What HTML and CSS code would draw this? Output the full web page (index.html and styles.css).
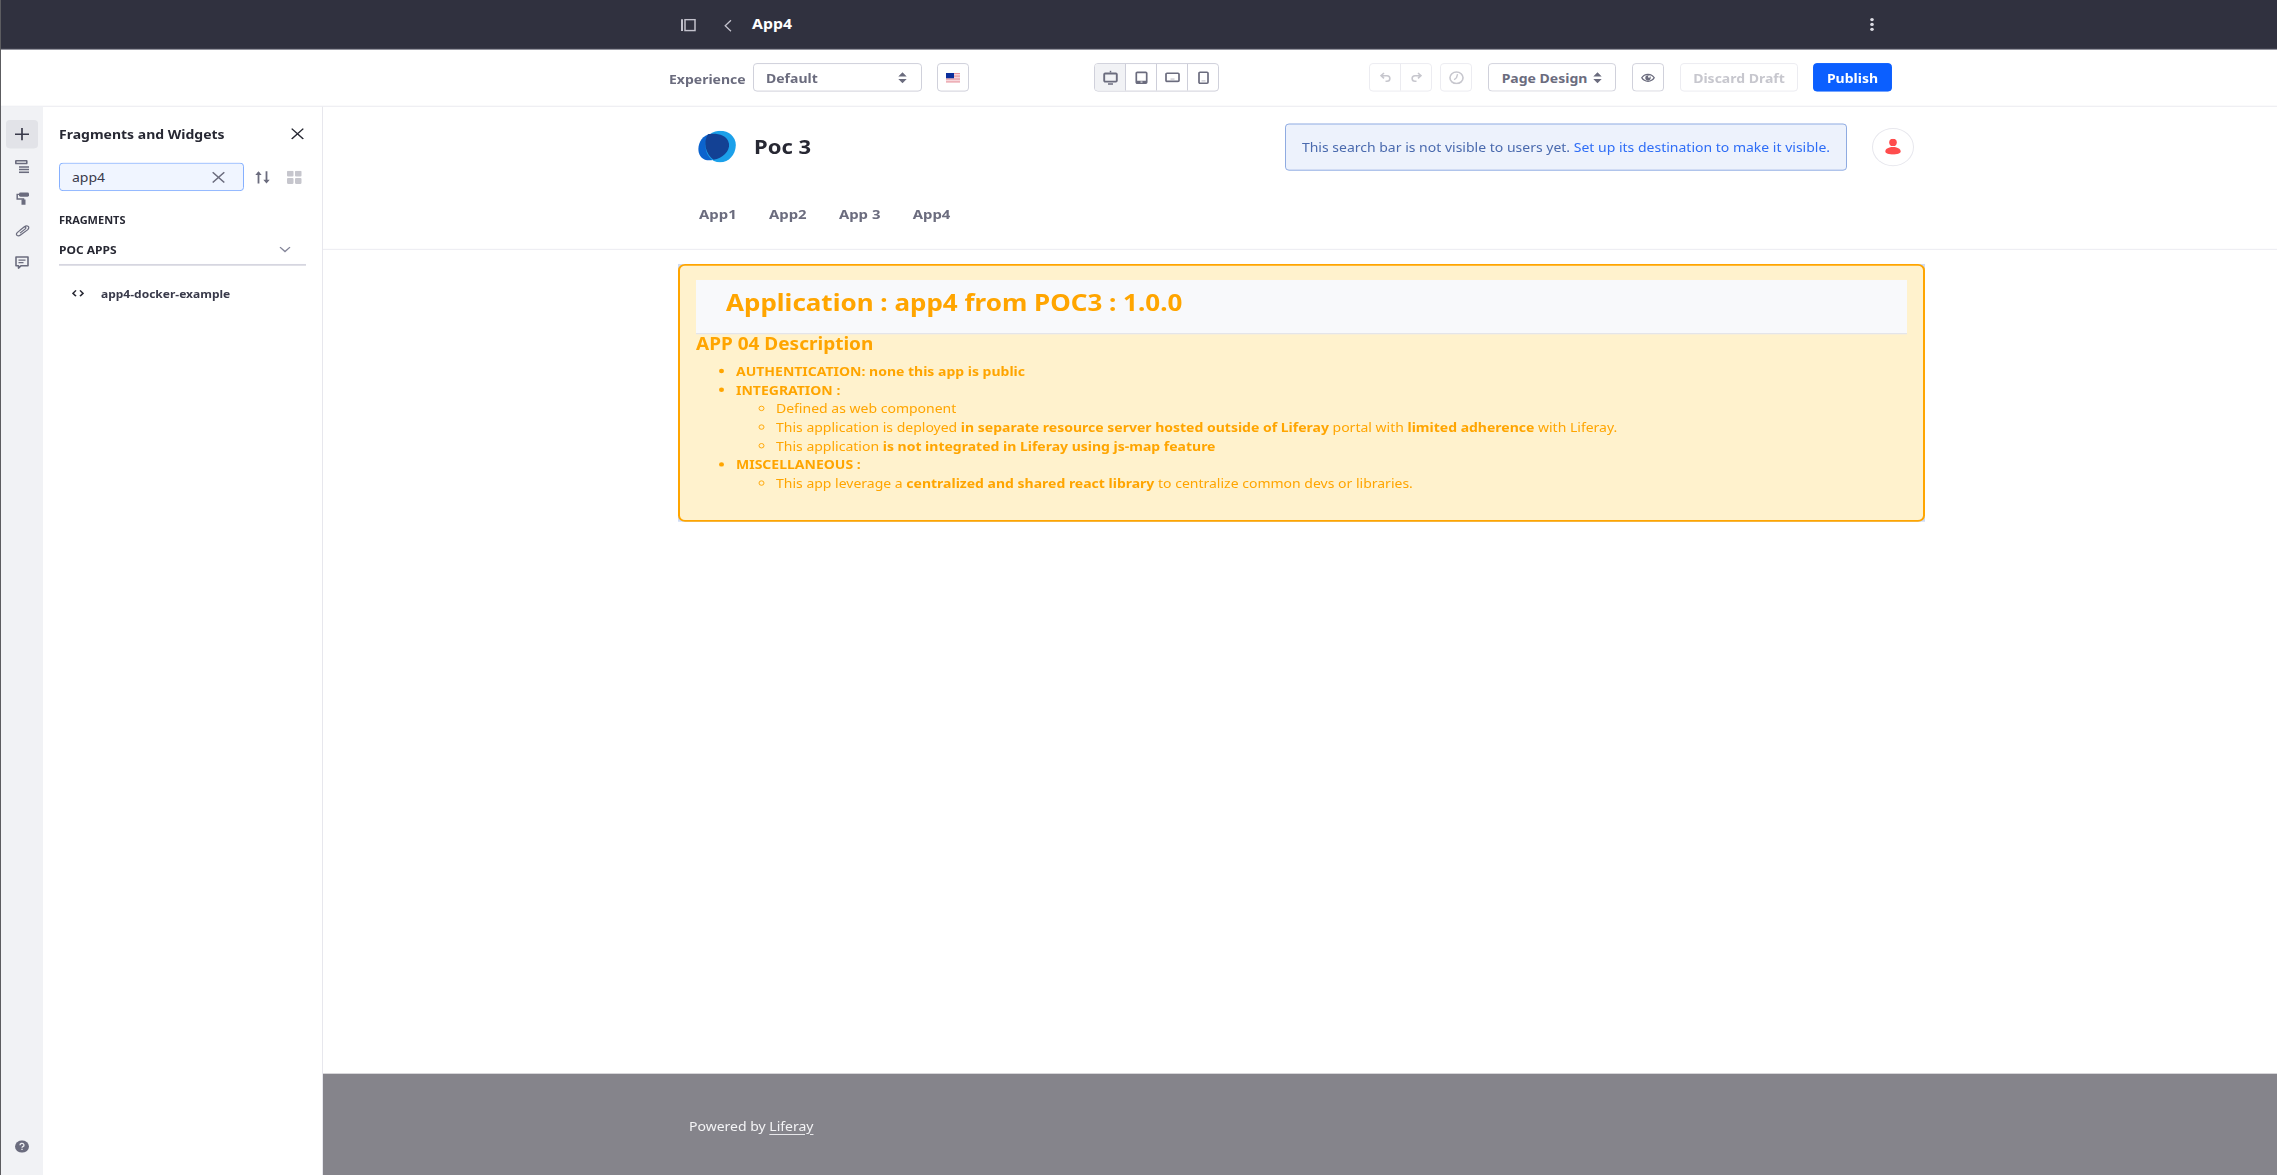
FILE: index.html
```html
<!DOCTYPE html>
<html lang="en">
<head>
<meta charset="utf-8">
<title>App4</title>
<link rel="stylesheet" href="styles.css">
</head>
<body>
<div class="app">
  <header class="topbar">
    <div class="topbar-left">
      <svg class="ic-panel" width="15" height="15" viewBox="0 0 15 14" preserveAspectRatio="none"><path d="M1 .5v12.500" stroke="#c3c2cd" stroke-width="2"/><rect x="4" y="1" width="10" height="11.500" fill="none" stroke="#c3c2cd" stroke-width="1.500"/></svg>
      <svg class="ic-back" width="8" height="14" viewBox="0 0 8 12" preserveAspectRatio="none"><path d="M7 .7L1.200 6 7 11.300" fill="none" stroke="#c3c2cd" stroke-width="1.300"/></svg>
      <span class="page-title">App4</span>
    </div>
    <svg class="ic-kebab" width="4" height="15" viewBox="0 0 4 15" fill="#dcdce4"><circle cx="2" cy="2" r="1.800"/><circle cx="2" cy="7.500" r="1.800"/><circle cx="2" cy="13" r="1.800"/></svg>
  </header>
  <div class="toolbar">
    <span class="exp-label">Experience</span>
    <div class="btn select"><span>Default</span><svg width="9" height="13" viewBox="0 0 9 12" preserveAspectRatio="none" fill="#6b6c7e"><path d="M.3 4.800L4.500.300l4.200 4.500zM.3 7.200l4.200 4.500 4.200-4.500z"/></svg></div>
    <div class="btn flag"><svg width="14" height="11" viewBox="0 0 14 10" preserveAspectRatio="none"><path fill="#f7d7dc" d="M0 0h14v10H0z"/><path d="M0 .5h14M0 3.300h14M0 6.300h14M0 9.300h14" stroke="#e58d96"/><path fill="#0b2f9c" d="M0 0h8v5.500H0z"/></svg></div>
    <div class="devices">
      <div class="device on"><svg width="15" height="17" viewBox="0 0 15 16" preserveAspectRatio="none" fill="none" stroke="#6b6c7e"><path d="M7.500.5v2" stroke-width="1.500"/><rect x="1.200" y="3.500" width="12.600" height="8.500" rx="1" stroke-width="1.900"/><path d="M5 14.600h5" stroke-width="1.600"/></svg></div>
      <div class="device"><svg width="13" height="15" viewBox="0 0 13 14" preserveAspectRatio="none"><rect x="1.300" y="1.300" width="10.400" height="11.400" rx="1" fill="none" stroke="#6b6c7e" stroke-width="1.700"/><path d="M1.500 10.200h10v2.500h-10z" fill="#6b6c7e"/><path d="M5.500 11.500h2" stroke="#fff"/></svg></div>
      <div class="device"><svg width="15" height="12" viewBox="0 0 15 11" preserveAspectRatio="none" fill="none" stroke="#6b6c7e"><rect x="1" y="1.300" width="13" height="8.400" rx="1" stroke-width="1.700"/><path d="M5.500 7.300h4" opacity=".5"/></svg></div>
      <div class="device"><svg width="11" height="15" viewBox="0 0 11 14" preserveAspectRatio="none" fill="none" stroke="#6b6c7e"><rect x="1" y="1.200" width="9" height="11.500" rx="1" stroke-width="1.700"/><path d="M3.500 10.300h4" opacity=".5"/></svg></div>
    </div>
    <div class="history">
      <div><svg width="11" height="12" viewBox="0 0 11 11" preserveAspectRatio="none" fill="none" stroke="#c7c7ce" stroke-width="1.600"><path d="M4 1L1 3.800l3 2.800M1.300 3.800H7a2.800 2.800 0 0 1 0 5.700H5.500"/></svg></div>
      <div><svg width="11" height="12" viewBox="0 0 11 11" preserveAspectRatio="none" fill="none" stroke="#c7c7ce" stroke-width="1.600"><path d="M7 1l3 2.800-3 2.800M9.700 3.800H4a2.800 2.800 0 0 0 0 5.700h1.500"/></svg></div>
    </div>
    <div class="btn clock"><svg width="15" height="15" viewBox="0 0 14 14" fill="none" stroke="#c7c7ce"><circle cx="7" cy="7" r="6.100" stroke-width="1.500"/><path d="M8 3.200L7 7 4.800 9" stroke-width="1.300"/></svg></div>
    <div class="btn design"><span>Page Design</span><svg width="9" height="13" viewBox="0 0 9 12" preserveAspectRatio="none" fill="#6b6c7e"><path d="M.3 4.800L4.500.300l4.200 4.500zM.3 7.200l4.200 4.500 4.200-4.500z"/></svg></div>
    <div class="btn eye"><svg width="14" height="11" viewBox="0 0 14 10" preserveAspectRatio="none"><path d="M.8 5C3.500.300 10.500.300 13.200 5 10.500 9.700 3.500 9.700.8 5z" fill="none" stroke="#6b6c7e" stroke-width="1.400"/><circle cx="7" cy="5" r="2.700" fill="#6b6c7e"/><circle cx="8" cy="4" r="1" fill="#fff"/></svg></div>
    <div class="btn discard">Discard Draft</div>
    <div class="btn publish">Publish</div>
  </div>
  <div class="body">
    <nav class="rail">
      <div class="rail-item on"><svg width="14" height="14" viewBox="0 0 14 14"><path d="M7 0v14M0 7h14" stroke="#393a4a" stroke-width="1.700"/></svg></div>
      <div class="rail-item"><svg width="14" height="15" viewBox="0 0 14 14" preserveAspectRatio="none"><rect x=".8" y=".8" width="11" height="3" rx=".5" fill="none" stroke="#6b6c7e" stroke-width="1.600"/><path d="M4 7.300h10M4 10.100h10M4 13h10" stroke="#6b6c7e" stroke-width="1.600"/></svg></div>
      <div class="rail-item"><svg width="13" height="15" viewBox="0 0 13 14" preserveAspectRatio="none"><rect x="3" y=".5" width="10" height="4.500" rx="1.500" fill="#6b6c7e"/><path d="M3.500 2.500H1.200V7.300H7.500V9" fill="none" stroke="#6b6c7e" stroke-width="1.500"/><path d="M5.500 8h4v5.500h-4z" fill="#6b6c7e"/></svg></div>
      <div class="rail-item"><svg width="15" height="15" viewBox="0 0 24 24" fill="none" stroke="#6b6c7e" stroke-width="2"><path d="M8 16.500l8.500-7.800c2.200-2.100-.4-4.600-2.600-2.600L4 15c-4.400 4.200.6 8.600 4.800 4.800L20 10.500c5-4.700-.3-9.500-5-5.500L8 11"/></svg></div>
      <div class="rail-item"><svg width="14" height="15" viewBox="0 0 14 13" preserveAspectRatio="none" fill="none" stroke="#6b6c7e"><path d="M1 1h12v8.500H6.200L3.500 11.800V9.500H1z" stroke-width="1.600" stroke-linejoin="round"/><path d="M3.500 4h7M3.500 6.500h5" stroke-width="1.300"/></svg></div>
      <div class="rail-help"><svg width="14" height="14" viewBox="0 0 14 14"><circle cx="7" cy="7" r="7" fill="#6b6c7e"/><path d="M5 5.500a2 1.900 0 1 1 2.800 1.600c-.6.300-.8.600-.8 1.300M7 9.500v1.400" fill="none" stroke="#f1f2f5" stroke-width="1.300"/></svg></div>
    </nav>
    <aside class="panel">
      <div class="panel-head"><span>Fragments and Widgets</span><svg width="13" height="13" viewBox="0 0 13 13"><path d="M.7.7l11.600 11.600M12.300.7L.7 12.300" stroke="#272833" stroke-width="1.500"/></svg></div>
      <div class="search-row">
        <div class="search"><span>app4</span><svg width="13" height="13" viewBox="0 0 13 13"><path d="M.7.7l11.600 11.600M12.300.7L.7 12.300" stroke="#6b6c7e" stroke-width="1.500"/></svg></div>
        <svg class="ic-sort" width="15" height="15" viewBox="0 0 15 14" preserveAspectRatio="none"><path d="M3.500 13.500V2M11.500.5v11" stroke="#6b6c7e" stroke-width="1.800"/><path d="M.3 4.500L3.500.5l3.200 4zM8.300 9.500l3.200 4 3.200-4z" fill="#6b6c7e"/></svg>
        <svg class="ic-grid" width="15" height="15" viewBox="0 0 15 13" preserveAspectRatio="none" fill="#c6c6cd"><rect width="6.500" height="5.700" rx="1"/><rect x="8" width="6.500" height="5.700" rx="1"/><rect y="7.200" width="6.500" height="5.700" rx="1"/><rect x="8" y="7.200" width="6.500" height="5.700" rx="1"/></svg>
      </div>
      <div class="group">FRAGMENTS</div>
      <div class="collection"><span>POC APPS</span><svg width="12" height="8" viewBox="0 0 12 8"><path d="M1 1l5 5L11 1" fill="none" stroke="#85869a" stroke-width="1.400"/></svg></div>
      <div class="fragment"><svg width="12" height="8" viewBox="0 0 12 8"><path d="M4 .7L1 4l3 3.300M8 .7L11 4 8 7.300" fill="none" stroke="#272833" stroke-width="1.600"/></svg><span>app4-docker-example</span></div>
    </aside>
    <main class="canvas">
      <div class="site-head">
        <div class="brand-row">
          <svg class="logo" width="38" height="36" viewBox="0 0 38 32" preserveAspectRatio="none"><path d="M13 3C-2 5-4 28 9 29.500c8 .8 15-4 19-9V4z" fill="#0b63ce"/><path d="M20 .3C30-.7 38 6 37.800 14.500 37.500 24 31 31.500 22 31.500 13 31.500 7.500 24 7.500 14.500 7.500 7 12 1.300 20 .3z" fill="#1ba0ea"/><path d="M10 3.700C15 2.300 29 2.500 31 13c1 7.500-6.500 14.500-15.500 16.100C8 24 4.500 12 10 3.700z" fill="#134194"/></svg>
          <span class="brand">Poc 3</span>
          <div class="notice"><span>This search bar is not visible to users yet. <a>Set up its destination to make it visible.</a></span></div>
          <div class="avatar"><svg width="16" height="18" viewBox="0 0 16 16" preserveAspectRatio="none" fill="#ff4d4d"><ellipse cx="8" cy="3.800" rx="3.800" ry="3.600"/><path d="M.3 12.800C.3 6.800 15.700 6.800 15.700 12.800 15.700 16.800.3 16.800.3 12.800z"/></svg></div>
        </div>
        <div class="links"><span>App1</span><span>App2</span><span>App 3</span><span>App4</span></div>
      </div>
      <div class="fragment-outline">
      <section class="webapp">
        <h1>Application : app4 from POC3 : 1.0.0</h1>
        <h2>APP 04 Description</h2>
        <ul>
          <li><b>AUTHENTICATION: none this app is public</b></li>
          <li><b>INTEGRATION :</b>
            <ul>
              <li>Defined as web component</li>
              <li>This application is deployed <b>in separate resource server hosted outside of Liferay</b> portal with <b>limited adherence</b> with Liferay.</li>
              <li>This application <b>is not integrated in Liferay using js-map feature</b></li>
            </ul>
          </li>
          <li><b>MISCELLANEOUS :</b>
            <ul>
              <li>This app leverage a <b>centralized and shared react library</b> to centralize common devs or libraries.</li>
            </ul>
          </li>
        </ul>
      </section>
      </div>
      <footer class="footer"><span>Powered by <u>Liferay</u></span></footer>
    </main>
  </div>
</div>
</body>
</html>
```
FILE: styles.css
```css
* { box-sizing: border-box; }
html { overflow: hidden; }
body { margin: 0; height: 1175px; overflow: hidden; font-family: "Noto Sans", sans-serif; font-size: 14px; color: #272833; background: #fff; }
svg { display: block; flex: none; }
.app { height: 1322px; margin-bottom: -147px; transform: scaleY(.8888); transform-origin: 0 0; display: flex; flex-direction: column; border-left: 1px solid #5c5c60; overflow: hidden; white-space: nowrap; }

.topbar { height: 56px; flex: none; background: #30313f; border-bottom: 1px solid #a4a4ae; display: flex; align-items: center; justify-content: space-between; padding: 0 403px 0 680px; }
.topbar-left { display: flex; align-items: center; }
.ic-panel { margin-top: 2px; }
.ic-back { margin-left: 28px; margin-top: 2px; }
.page-title { margin-left: 20px; color: #fff; font-weight: 700; font-size: 15.8px; line-height: 22px; padding-bottom: 1px; }

.toolbar { height: 64px; flex: none; border-bottom: 1px solid #e7e7ed; display: flex; align-items: center; padding: 0 0 1px 668px; color: #6b6c7e; font-weight: 700; }
.exp-label { width: 84px; padding-top: 2px; }
.btn { height: 32px; border: 1px solid #cdced9; border-radius: 4px; display: flex; align-items: center; justify-content: center; background: #fff; }
.select { width: 169px; padding: 0 14px 0 12px; justify-content: space-between; }
.flag { width: 32px; margin-left: 15px; }
.devices { display: flex; width: 125px; height: 32px; margin-left: 125px; border: 1px solid #cdced9; border-radius: 4px; overflow: hidden; }
.device { flex: 1; display: flex; align-items: center; justify-content: center; border-left: 1px solid #cdced9; }
.device:first-child { border-left: 0; }
.device.on { background: #f1f2f5; }
.history { display: flex; width: 63px; height: 32px; margin-left: 150px; border: 1px solid #ebebf0; border-radius: 4px; }
.history div { flex: 1; display: flex; align-items: center; justify-content: center; }
.history div + div { border-left: 1px solid #ebebf0; }
.clock { width: 32px; margin-left: 8px; border-color: #ebebf0; }
.design { width: 128px; margin-left: 16px; gap: 6px; }
.eye { width: 32px; margin-left: 16px; }
.discard { width: 118px; margin-left: 16px; color: #c7c7ce; border-color: #ebebf0; }
.publish { width: 79px; margin-left: 15px; color: #fff; background: #0b5fff; border-color: #0b5fff; }

.body { flex: 1; display: flex; min-height: 0; }
.rail { width: 42px; background: #f1f2f5; padding: 15px 5px 25px; display: flex; flex-direction: column; gap: 4px; }
.rail-item { height: 32px; border-radius: 4px; display: flex; align-items: center; justify-content: center; }
.rail-item.on { background: #e2e3e8; }
.rail-help { margin-top: auto; display: flex; justify-content: center; }

.panel { width: 280px; border-right: 1px solid #e7e7ed; padding: 18px 16px 0; }
.panel-head { height: 24px; display: flex; justify-content: space-between; align-items: center; font-weight: 700; padding-right: 2px; }
.search-row { display: flex; align-items: center; margin-top: 21px; height: 32px; }
.search { width: 185px; height: 32px; border: 1px solid #80acff; border-radius: 4px; background: #f0f5ff; display: flex; align-items: center; justify-content: space-between; padding: 0 18px 0 12px; color: #393a4a; }
.ic-sort { margin-left: 11px; }
.ic-grid { margin-left: 17px; }
.group { margin-top: 23px; height: 20px; line-height: 20px; font-size: 11px; font-weight: 700; }
.collection { margin-top: 7px; height: 34px; border-bottom: 2px solid #d6d6e0; display: flex; align-items: center; justify-content: space-between; padding-right: 15px; font-size: 12px; font-weight: 700; }
.fragment { display: flex; align-items: center; gap: 17px; margin-top: 19px; height: 24px; padding-left: 13px; font-size: 12px; font-weight: 700; color: #393a4a; }

.canvas { flex: 1; display: flex; flex-direction: column; min-width: 0; }
.site-head { height: 161px; border-bottom: 1px solid #e9e9f0; padding: 18px 363px 0 375px; }
.brand-row { height: 54px; display: flex; align-items: center; }
.brand { margin-left: 18px; padding-bottom: 2px; font-size: 22px; line-height: 28px; font-weight: 700; }
.notice { width: 562px; height: 53px; margin-left: auto; border: 1px solid #89a7e0; border-radius: 4px; background: #edf2fc; display: flex; align-items: center; justify-content: center; color: #4a6aae; }
.notice a { color: #2e6df6; }
.avatar { width: 42px; height: 43px; margin-left: 25px; border: 1px solid #e7e7ed; border-radius: 50%; display: flex; align-items: center; justify-content: center; }
.links { display: flex; gap: 32.3px; margin-top: 37px; font-size: 14.9px; font-weight: 700; color: #6b6c7e; line-height: 22px; padding-left: 1px; }

.fragment-outline { width: 1247px; margin: 16px 0 0 355px; background: #cfdcf5; }
.webapp { height: 290px; border: 2px solid orange; border-radius: 7px; background: #fff2cd; padding: 16px; color: orange; line-height: 21px; }
.webapp h1 { height: 61px; margin: 0; padding: 0 30px; background: #f8f9fb; border-bottom: 1px solid #dcdde2; font-size: 26px; line-height: 51px; font-weight: 700; }
.webapp h2 { margin: 0; font-size: 19px; line-height: 23px; font-weight: 700; }
.webapp ul { margin: 0; padding-left: 40px; }
.webapp h2 + ul { margin-top: 8px; }
.webapp ul ul { padding-left: 40px; }
.webapp b { font-weight: 700; }

.footer { height: 114px; margin-top: auto; background: #85848b; color: #f4f4f6; padding: 0 0 0 366px; display: flex; align-items: center; }
.footer span { padding-top: 4px; }
.footer u { text-underline-offset: 3px; }
```
